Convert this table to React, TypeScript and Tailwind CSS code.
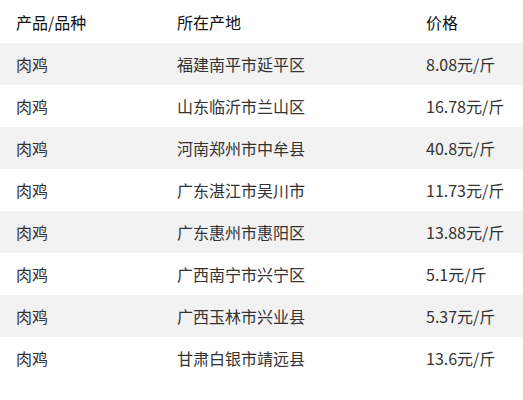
import React from 'react';

const rows: [string, string, string][] = [
  ['肉鸡', '福建南平市延平区', '8.08元/斤'],
  ['肉鸡', '山东临沂市兰山区', '16.78元/斤'],
  ['肉鸡', '河南郑州市中牟县', '40.8元/斤'],
  ['肉鸡', '广东湛江市吴川市', '11.73元/斤'],
  ['肉鸡', '广东惠州市惠阳区', '13.88元/斤'],
  ['肉鸡', '广西南宁市兴宁区', '5.1元/斤'],
  ['肉鸡', '广西玉林市兴业县', '5.37元/斤'],
  ['肉鸡', '甘肃白银市靖远县', '13.6元/斤'],
];

export default function App() {
  return (
    <div
      className="w-[523px] h-[400px] bg-white text-[16px]"
      style={{ fontFamily: '"Noto Sans CJK SC", "Noto Sans", sans-serif' }}
    >
      {/* header */}
      <div className="grid grid-cols-[161px_249px_1fr] h-[43px] items-center text-[#111]">
        <div className="pl-4">产品/品种</div>
        <div className="pl-4">所在产地</div>
        <div className="pl-4">价格</div>
      </div>
      {rows.map((r, i) => (
        <div
          key={i}
          className={`grid grid-cols-[161px_249px_1fr] h-[42px] items-center text-[#333] ${
            i % 2 === 0 ? 'bg-[#f2f2f2]' : 'bg-white'
          }`}
        >
          <div className="pl-4">{r[0]}</div>
          <div className="pl-4">{r[1]}</div>
          <div className="pl-4">{r[2]}</div>
        </div>
      ))}
    </div>
  );
}
